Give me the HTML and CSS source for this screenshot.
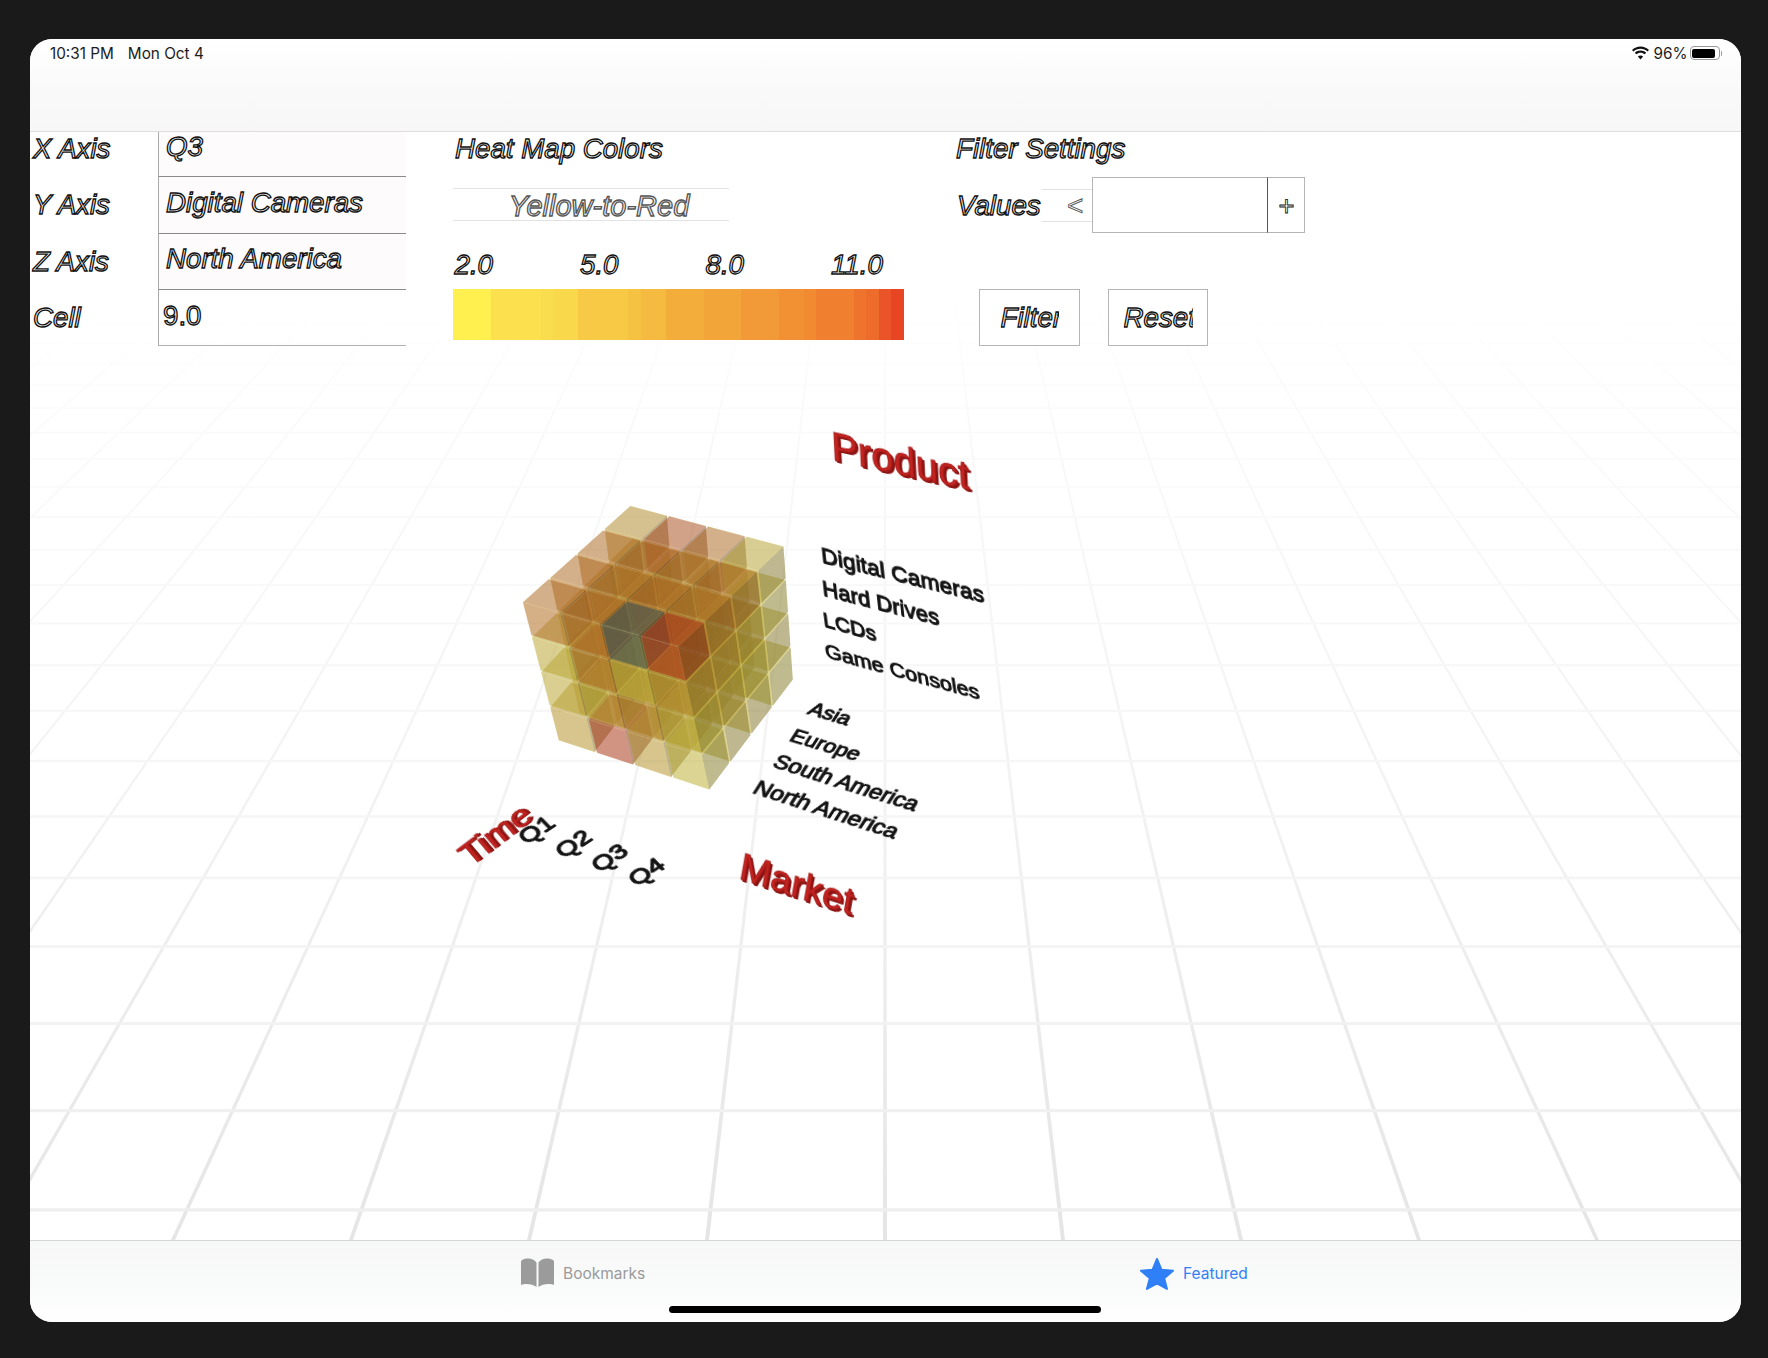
FILE: index.html
```html
<!DOCTYPE html>
<html lang="en">
<head>
<meta charset="utf-8">
<title>Data Cube</title>
<link rel="stylesheet" href="styles.css">
</head>
<body>
<div class="screen">
  <svg class="scene" id="scene" width="1768" height="1358" viewBox="0 0 1768 1358" aria-hidden="true">
    <defs>
      <linearGradient id="gridV" gradientUnits="userSpaceOnUse" x1="0" y1="300" x2="0" y2="1240">
        <stop offset="0" stop-color="#f8f8f8" stop-opacity="0"/>
        <stop offset="0.12" stop-color="#f9f9f9"/>
        <stop offset="0.5" stop-color="#f3f3f3"/>
        <stop offset="1" stop-color="#e5e5e5"/>
      </linearGradient>
      <linearGradient id="gridH" gradientUnits="userSpaceOnUse" x1="0" y1="300" x2="0" y2="1240">
        <stop offset="0" stop-color="#fbfbfb" stop-opacity="0"/>
        <stop offset="0.12" stop-color="#fbfbfb"/>
        <stop offset="0.5" stop-color="#f6f6f6"/>
        <stop offset="1" stop-color="#eeeeee"/>
      </linearGradient>
    </defs>
    <g id="grid"></g>
    <g id="cube" class="cube"></g>
  </svg>
  <div class="labels">
    <span class="tag tag-title tag-product">Product</span>
    <span class="tag tag-digital">Digital Cameras</span>
    <span class="tag tag-hard">Hard Drives</span>
    <span class="tag tag-lcd">LCDs</span>
    <span class="tag tag-game">Game Consoles</span>
    <span class="tag tag-asia">Asia</span>
    <span class="tag tag-europe">Europe</span>
    <span class="tag tag-south">South America</span>
    <span class="tag tag-north">North America</span>
    <span class="tag tag-q1">Q1</span>
    <span class="tag tag-q2">Q2</span>
    <span class="tag tag-q3">Q3</span>
    <span class="tag tag-q4">Q4</span>
    <span class="tag tag-title tag-time">Time</span>
    <span class="tag tag-title tag-market">Market</span>
  </div>

  <header class="topbar">
    <div class="status">
      <div class="status-left"><span>10:31 PM</span><span>Mon Oct 4</span></div>
      <div class="status-right">
        <svg class="wifi" width="19" height="14" viewBox="0 0 19 14">
          <path d="M9.5 2.8c2.7 0 5.1 1 7 2.7l1.5-1.6C15.700 1.800 12.700.5 9.500.5S3.300 1.800 1 3.900l1.500 1.600c1.900-1.700 4.300-2.700 7-2.700z"/>
          <path d="M9.500 6.700c1.600 0 3.100.6 4.200 1.600l1.500-1.600c-1.500-1.400-3.500-2.200-5.700-2.200s-4.200.8-5.700 2.200l1.500 1.600c1.100-1 2.600-1.600 4.200-1.600z"/>
          <path d="M9.500 13.400l2.600-2.800c-.7-.6-1.600-1-2.600-1s-1.900.4-2.600 1z"/>
        </svg>
        <span>96%</span>
        <div class="battery"><div class="battery-level"></div></div>
        <div class="battery-nub"></div>
      </div>
    </div>
  </header>

  <main class="controls">
    <section class="fields">
      <div class="outline field-label">X Axis</div>
      <div class="outline field-value tinted">Q3</div>
      <div class="outline field-label">Y Axis</div>
      <div class="outline field-value tinted">Digital Cameras</div>
      <div class="outline field-label">Z Axis</div>
      <div class="outline field-value tinted">North America</div>
      <div class="outline field-label">Cell</div>
      <div class="outline field-value upright">9.0</div>
    </section>

    <section class="heat">
      <div class="outline heat-title">Heat Map Colors</div>
      <div class="outline heat-select">Yellow-to-Red</div>
      <div class="heat-scale">
        <span class="outline">2.0</span>
        <span class="outline">5.0</span>
        <span class="outline">8.0</span>
        <span class="outline">11.0</span>
      </div>
      <div class="heat-bar"></div>
    </section>

    <section class="filter">
      <div class="outline filter-title">Filter Settings</div>
      <div class="filter-values">
        <div class="outline values-label">Values</div>
        <div class="outline op-select">&lt;</div>
        <div class="value-input"></div>
        <div class="outline value-add">+</div>
      </div>
      <div class="filter-actions">
        <div class="action"><span class="outline action-text">Filter</span></div>
        <div class="action"><span class="outline action-text">Reset</span></div>
      </div>
    </section>
  </main>

  <footer class="tabbar">
    <div class="tab tab-bookmarks">
      <svg width="35" height="30" viewBox="0 0 35 30">
        <path fill="#9b9b9b" d="M16.500 4.500V29c-2.500-2-6-3-10-3-2 0-4 .3-5.500 1V4C1 3 1.500 2.300 2.500 1.800 4 1 6 .5 8.500.5c3 0 6 1.300 8 4z"/>
        <path fill="#9b9b9b" d="M18.500 4.500V29c2.500-2 6-3 10-3 2 0 4 .3 5.500 1V4c0-1-.5-1.700-1.500-2.200C31 1 29 .5 26.500.5c-3 0-6 1.300-8 4z"/>
      </svg>
      <span>Bookmarks</span>
    </div>
    <div class="tab tab-featured">
      <svg width="36" height="33" viewBox="0 0 36 33">
        <path fill="#2f7ff7" stroke="#2f7ff7" stroke-width="2" stroke-linejoin="round" d="M18 2l4.500 10.800 11.500.9-8.800 7.500 2.800 10.800L18 26.300 7.900 32l2.900-10.800L2 13.700l11.500-.9z"/>
      </svg>
      <span>Featured</span>
    </div>
    <div class="home-indicator"></div>
  </footer>
</div>
<script src="scene.js"></script>
</body>
</html>
```

FILE: styles.css
```css
* { box-sizing: border-box; }
html, body { margin: 0; height: 100%; }
body {
  background: #1a1a1a;
  padding: 39px 27px 36px 30px;
  font-family: "Liberation Sans", Arial, sans-serif;
  overflow: hidden;
}
.screen {
  position: relative;
  width: 1711px;
  height: 1283px;
  border-radius: 22px;
  overflow: hidden;
  background: #fff;
  display: flex;
  flex-direction: column;
}
.scene { position: absolute; left: -30px; top: -39px; }
.cube { filter: blur(0.6px); }
.labels { position: absolute; left: -30px; top: -39px; width: 1768px; height: 1358px; }

/* 3D labels: each matrix places the text baseline on the free canvas */
.tag {
  position: absolute;
  left: 0;
  top: -0.8465em;
  line-height: 1;
  white-space: nowrap;
  transform-origin: 0 0.8465em;
  color: #141414;
  -webkit-text-stroke: 1px #141414;
  text-shadow: 0.6px 0.8px 0 #333;
  filter: blur(0.35px);
}
.tag-title {
  color: #c22320;
  -webkit-text-stroke: 0.9px #a81c1a;
  text-shadow: 1px 1px 0 #8b1513, 2px 2px 0 #8b1513, 3px 2px 0 #8b1513;
}
.tag-product { font-size: 41px; transform: matrix(0.975, 0.215, 0.05, 0.98, 832, 461); }
.tag-digital { font-size: 23.6px; transform: matrix(0.97, 0.24, 0.1, 0.93, 822, 563); }
.tag-hard { font-size: 22.8px; transform: matrix(0.97, 0.25, 0.1, 0.93, 823, 595); }
.tag-lcd { font-size: 22px; transform: matrix(0.96, 0.27, 0.12, 0.93, 824, 627); }
.tag-game { font-size: 22.300px; transform: matrix(0.965, 0.265, 0.14, 0.92, 826, 658); }
.tag-asia { font-size: 21.500px; transform: matrix(0.955, 0.29, -0.5, 0.78, 806, 714); }
.tag-europe { font-size: 22px; transform: matrix(0.955, 0.29, -0.5, 0.78, 788, 741); }
.tag-south { font-size: 23px; transform: matrix(0.954, 0.3, -0.5, 0.78, 771, 766); }
.tag-north { font-size: 23.600px; transform: matrix(0.951, 0.31, -0.5, 0.78, 751, 793); }
.tag-q1 { font-size: 26px; transform: matrix(0.88, -0.58, 0.6, 0.62, 526, 845); }
.tag-q2 { font-size: 26px; transform: matrix(0.88, -0.58, 0.6, 0.62, 563, 859); }
.tag-q3 { font-size: 26px; transform: matrix(0.88, -0.58, 0.6, 0.62, 599, 873); }
.tag-q4 { font-size: 26px; transform: matrix(0.88, -0.58, 0.6, 0.62, 636, 887); }
.tag-time { font-size: 36px; transform: matrix(0.82, -0.62, 0.55, 0.65, 470, 867); }
.tag-market { font-size: 39px; transform: matrix(0.951, 0.31, -0.17, 0.95, 738, 878); }

/* top bar */
.topbar {
  position: relative;
  z-index: 2;
  height: 93px;
  flex: none;
  background: linear-gradient(#ffffff, #f9f9f9 60%, #f7f7f7);
  border-bottom: 1px solid #dedede;
  font-family: Inter, "Liberation Sans", sans-serif;
  font-size: 15.300px;
  color: #1c1c1c;
}
.status {
  display: flex;
  justify-content: space-between;
  align-items: center;
  height: 28px;
  padding: 0 19px 0 20px;
}
.status-left { display: flex; gap: 14px; }
.status-right { display: flex; align-items: center; gap: 3px; }
.wifi { fill: #111; margin-right: 1px; }
.battery {
  width: 30px;
  height: 14px;
  border: 1px solid #999;
  border-radius: 4px;
  padding: 1.500px;
  margin-left: -1px;
}
.battery-level { width: 92%; height: 100%; background: #000; border-radius: 2px; }
.battery-nub { width: 1.500px; height: 5px; background: #999; margin-left: -2px; border-radius: 0 1px 1px 0; }

/* control panel */
.controls {
  position: relative;
  z-index: 1;
  flex: none;
  display: flex;
  margin-top: -12px;
  align-items: flex-start;
}
.outline {
  color: #f2f2f2;
  font-style: italic;
  font-size: 27.700px;
  line-height: 32px;
  -webkit-text-stroke: 1.300px #101010;
}
.fields {
  display: grid;
  grid-template-columns: 128px 248px;
  grid-auto-rows: 56.330px;
  flex: none;
  margin-top: 1px;
}
.field-label { display: flex; align-items: center; padding: 0 0 0 3px; }
.field-value {
  display: flex;
  align-items: center;
  padding: 0 0 4px 7px;
  border-left: 1px solid #aaa;
  border-bottom: 1px solid #8a8a8a;
}
.tinted { background: #fdfbfc; }
.upright { font-style: normal; padding-left: 4px; border-bottom-color: #b0b0b0; }

.heat { flex: none; width: 451px; margin-left: 47px; }
.heat-title { height: 56px; display: flex; align-items: center; padding: 1px 0 0 2px; }
.heat-select {
  width: 276px;
  height: 33px;
  margin: 12px 0;
  padding: 2px 0 0 16px;
  display: flex;
  align-items: center;
  justify-content: center;
  border-top: 1px solid #e2e2e2;
  border-bottom: 1px solid #e2e2e2;
  font-size: 29px;
  -webkit-text-stroke-color: #555;
}
.heat-scale {
  display: grid;
  grid-template-columns: repeat(4, 125.500px);
  height: 56px;
  align-items: center;
  padding: 7px 0 0 1.500px;
}
.heat-bar {
  height: 51px;
  background: linear-gradient(90deg,
    #fff04f 0 8.33%, #fce04e 8.33% 19.44%, #fadd4e 19.44% 22.22%, #f9d84b 22.22% 27.78%,
    #f7c944 27.78% 38.89%, #f6c242 38.89% 41.67%, #f5bb40 41.67% 47.22%, #f3ad3b 47.22% 55.56%,
    #f2a538 55.56% 63.89%, #f19a37 63.89% 72.22%, #f29133 72.22% 77.78%, #f18a31 77.78% 80.56%,
    #f07f30 80.56% 88.89%, #ee742e 88.89% 91.67%, #ed6c2c 91.67% 94.44%, #ea5428 94.44% 97.22%,
    #e84525 97.22% 100%);
}

.filter { flex: none; margin-left: 52px; }
.filter-title { height: 57px; display: flex; align-items: center; }
.filter-values { display: flex; height: 56px; align-items: center; }
.values-label { width: 86px; padding: 1px 0 0 1px; }
.op-select {
  width: 50px;
  height: 33px;
  display: flex;
  align-items: center;
  justify-content: flex-end;
  padding: 2px 9px 0 0;
  border-top: 1px solid #e2e2e2;
  border-bottom: 1px solid #e2e2e2;
  -webkit-text-stroke: 0.900px #555;
}
.value-input { width: 176px; height: 56px; border: 1px solid #b5b5b5; background: #fff; }
.value-add {
  width: 38px;
  height: 56px;
  padding-top: 2px;
  border: 1px solid #b5b5b5;
  border-left: 1px solid #555;
  margin-left: -1px;
  display: flex;
  align-items: center;
  justify-content: center;
  -webkit-text-stroke-width: 0.800px;
}
.filter-actions { display: flex; gap: 28px; margin: 56px 0 0 23px; }
.action {
  width: 100.500px;
  height: 57px;
  padding-left: 4px;
  border: 1px solid #b5b5b5;
  background: #fff;
  display: flex;
  align-items: center;
  justify-content: center;
}
.action-text { clip-path: inset(-4px 3px -4px 0); }

/* tab bar */
.tabbar {
  position: relative;
  z-index: 2;
  margin-top: auto;
  height: 82px;
  flex: none;
  background: linear-gradient(#f7f7f7, #f9fafa 55%, #ffffff);
  border-top: 1px solid #d6d6d6;
  font-family: Inter, "Liberation Sans", sans-serif;
  font-size: 15.500px;
}
.tab { position: absolute; top: 14px; display: flex; align-items: center; gap: 8px; height: 36px; }
.tab-bookmarks { left: 490px; color: #9a9a9a; }
.tab-featured { left: 1109px; color: #3280f6; }
.home-indicator {
  position: absolute;
  left: 639px;
  bottom: 9px;
  width: 432px;
  height: 7.500px;
  border-radius: 4px;
  background: #000;
}
```

FILE: scene.js
```js
// Perspective floor grid and translucent 4x4x4 data cube.
(function () {
  var NS = 'http://www.w3.org/2000/svg';
  var grid = document.getElementById('grid');
  var cube = document.getElementById('cube');

  function add(parent, tag, attrs) {
    var el = document.createElementNS(NS, tag);
    for (var a in attrs) el.setAttribute(a, attrs[a]);
    parent.appendChild(el);
    return el;
  }

  // Floor grid: vanishing point (885,-308), 178px spacing at y=1240.
  var vx = 885, vy = -308, half = 2;
  for (var k = -24; k <= 24; k++) {
    var bx = vx + k * 178;
    add(grid, 'polygon', {
      points: vx + ',' + vy + ' ' + (bx - half) + ',1240 ' + (bx + half) + ',1240',
      fill: 'url(#gridV)'
    });
  }
  for (var n = 0; n < 24; n++) {
    var y = 1 / (6.588e-4 + 0.461e-4 * n) - 308;
    var h = (y + 308) / 1548 * 3.4;
    add(grid, 'rect', { x: 0, y: y - h / 2, width: 1768, height: h, fill: 'url(#gridH)' });
  }

  // Cube corners on screen (front = market row nearest the camera).
  function pt(x, y) { return [500 + x / 3, 490 + y / 3]; }
  var C = {
    c000: pt(62, 335), c100: pt(535, 470), c010: pt(172, 755), c110: pt(630, 905),
    c001: pt(390, 42), c101: pt(856, 165), c011: pt(420, 430), c111: pt(884, 570)
  };
  function proj(i, j, k) {
    var u = i / 4, v = j / 4, w = k / 4, out = [0, 0];
    for (var d = 0; d < 2; d++) {
      var a = C.c000[d] * (1 - u) + C.c100[d] * u;
      var b = C.c010[d] * (1 - u) + C.c110[d] * u;
      var c = C.c001[d] * (1 - u) + C.c101[d] * u;
      var e = C.c011[d] * (1 - u) + C.c111[d] * u;
      var f = a * (1 - v) + b * v;
      var g = c * (1 - v) + e * v;
      out[d] = f * (1 - w) + g * w;
    }
    return out;
  }

  var stops = [
    [2, [255, 240, 79]], [5, [247, 201, 68]], [8, [242, 165, 56]],
    [10.5, [240, 127, 48]], [12.5, [232, 69, 37]]
  ];
  function heat(v) {
    if (v === 'S') return [95, 120, 115];
    for (var s = 1; s < stops.length; s++) {
      if (v <= stops[s][0]) {
        var t = (v - stops[s - 1][0]) / (stops[s][0] - stops[s - 1][0]);
        return stops[s - 1][1].map(function (c, n) { return c + (stops[s][1][n] - c) * t; });
      }
    }
    return stops[stops.length - 1][1];
  }

  // values[product j][market k][quarter i]
  var values = [
    [[9, 9, 'S', 12], [9, 8, 9, 8], [9, 9, 8, 9], [6, 11, 9, 3]],
    [[3, 9, 2, 6], [6, 7, 8, 6], [8, 7, 6, 5], [7, 4, 6, 2]],
    [[3, 3, 6, 3], [5, 6, 4, 4], [5, 7, 3, 3], [4, 5, 6, 3]],
    [[5, 12, 5, 2], [6, 9, 5, 3], [5, 3, 4, 3], [3, 4, 3, 2]]
  ];

  function face(pts, rgb, shade, alpha, edge) {
    var attrs = {
      points: pts.map(function (p) { return p[0].toFixed(1) + ',' + p[1].toFixed(1); }).join(' '),
      fill: 'rgb(' + rgb.map(function (c) { return Math.round(c * shade); }).join(',') + ')',
      'fill-opacity': alpha
    };
    if (edge) {
      attrs.stroke = '#f6ee96';
      attrs['stroke-opacity'] = 0.16;
      attrs['stroke-width'] = 0.8;
    }
    add(cube, 'polygon', attrs);
  }

  var g = 0.03;
  for (var mk = 3; mk >= 0; mk--) {
    for (var pj = 3; pj >= 0; pj--) {
      for (var qi = 0; qi < 4; qi++) {
        var val = values[pj][mk][qi];
        var rgb = heat(val);
        var boost = (val === 12 && pj === 0) || val === 'S' ? 1.2 : 1;
        var i0 = qi + g, i1 = qi + 1 - g, j0 = pj + g, j1 = pj + 1 - g, k0 = mk + g, k1 = mk + 1 - g;
        var a = proj(i0, j0, k0), b = proj(i1, j0, k0), c = proj(i1, j1, k0), d = proj(i0, j1, k0);
        var e = proj(i0, j0, k1), f = proj(i1, j0, k1), h = proj(i1, j1, k1), l = proj(i0, j1, k1);
        face([d, c, h, l], rgb, 0.5, 0.2);
        face([e, f, h, l], rgb, 0.5, 0.2);
        face([a, e, l, d], rgb, 0.5, 0.2);
        face([a, b, f, e], rgb, 0.78, 0.42 * boost, true);
        face([a, b, c, d], rgb, 0.8, 0.44 * boost, true);
        face([b, f, h, c], rgb, 0.52, 0.4 * boost);
      }
    }
  }
})();
```
